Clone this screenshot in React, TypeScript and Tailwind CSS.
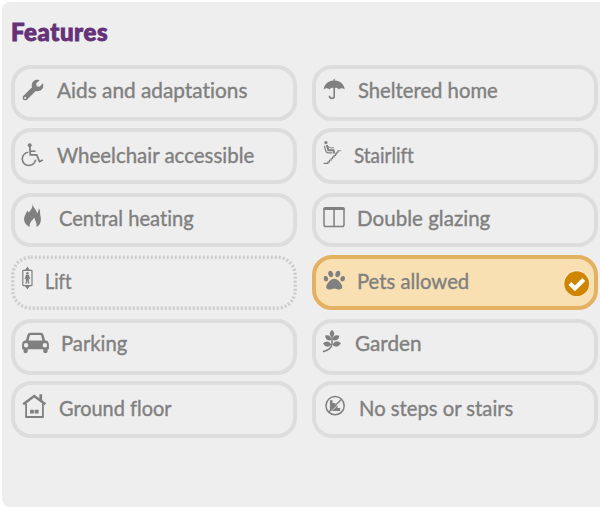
import type { ReactNode } from "react";
import { FaPaw, FaWrench } from "react-icons/fa";

const INK = "#808080";
const PANEL = "#eeeeee";

function Glyph({ children }: { children: ReactNode }) {
  return (
    <svg
      className="mt-[6px] ml-[5px] h-[28px] w-[24px] shrink-0 overflow-visible"
      viewBox="0 0 24 28"
      fill={INK}
      stroke="none"
    >
      {children}
    </svg>
  );
}

const Wrench = () => (
  <Glyph>
    <FaWrench x="2.5" y="4.5" size={21} color={INK} />
  </Glyph>
);

const Wheelchair = () => (
  <Glyph>
    <circle cx="9.7" cy="7.2" r="2" />
    <g fill="none" stroke={INK} strokeWidth="1.6">
      <path d="M9.8 8.5 L10.3 16.9 H16.7 L19.5 23.5 L22.9 22" strokeWidth="1.8" />
      <path d="M10 13.2 H15.5" />
      <path d="M8.3 14.2 A6.7 6.7 0 1 0 15.6 21.6" />
    </g>
  </Glyph>
);

const Flame = () => (
  <Glyph>
    <path d="M12.8 1 C13 5 16.6 6.6 17.1 10.4 C18.2 9.4 18.4 7.6 18.8 5.2 C20.4 7 20 9 20.2 11.5 C20.8 15 21.4 16.5 20.4 19.4 C19.7 21.6 18.3 23.2 16.4 24 C17.4 20 15.2 18.4 14.3 14.4 C12.6 17.6 9 18.9 9.7 24 C5.6 22 2.9 18 4.6 13.2 C5.3 11.2 6.8 9.8 7 7.3 L8.4 9.6 C10.8 7.6 12.4 4.8 12.8 1 Z" />
  </Glyph>
);

const Lift = () => (
  <Glyph>
    <path d="M7.4 1.4 L10 5.4 H4.8 Z M7.4 24.6 L10 20.8 H4.8 Z" />
    <rect x="2.8" y="5.4" width="9.2" height="15.2" rx="0.6" fill="none" stroke={INK} strokeWidth="1.2" />
    <circle cx="7.4" cy="8.2" r="1.2" />
    <path d="M6 9.8 H8.8 L10.2 14 L9.3 14.3 L8.7 13 L9.3 18.7 H8 L7.4 15 L6.8 18.7 H5.5 L6.1 13 L5.5 14.3 L4.6 14 Z" />
  </Glyph>
);

const Car = () => (
  <Glyph>
    <path
      fillRule="evenodd"
      d="M10.3 3.7 H20.7 Q23 3.7 23.6 6 L25 11.2 Q28.9 11.8 28.9 15.5 V20.3 H27.6 V22 A2.2 2.2 0 0 1 23.2 22 V20.3 H7.8 V22 A2.2 2.2 0 0 1 3.4 22 V20.3 H2.1 V15.5 Q2.1 11.8 6 11.2 L7.4 6 Q8 3.7 10.3 3.7 Z M10.9 6 Q10 6 9.7 7 L8.6 11.4 H22.4 L21.3 7 Q21 6 20.1 6 Z M6.1 14.1 A2.2 2.2 0 1 0 6.1 18.5 A2.2 2.2 0 1 0 6.1 14.1 Z M24.9 14.1 A2.2 2.2 0 1 0 24.9 18.5 A2.2 2.2 0 1 0 24.9 14.1 Z"
    />
  </Glyph>
);

const House = () => (
  <Glyph>
    <g fill="none" stroke={INK}>
      <path d="M3.2 13.3 L14.2 5 L25.4 13.3" strokeWidth="2.6" />
      <path d="M6.1 12.5 V26 H22.9 V12.5" strokeWidth="1.8" />
    </g>
    <path d="M19.4 3.3 H22.1 V10.5 L19.4 8.5 Z" />
    <rect x="10" y="18.8" width="3.9" height="3.8" rx="0.5" />
    <rect x="14.7" y="18.8" width="3.9" height="3.8" rx="0.5" />
  </Glyph>
);

const Umbrella = () => (
  <Glyph>
    <path d="M12.6 4 H13.8 V5.6 C19.2 5.9 22.9 9.3 23.8 14.4 C21.6 12.7 19.3 12.8 17.9 14.4 C16.7 12.9 14.9 12.4 13.9 13.2 H12.5 C11.4 12.4 9.7 12.9 8.5 14.4 C7.1 12.8 4.8 12.7 2.6 14.4 C3.5 9.3 7.2 5.9 12.6 5.6 Z" />
    <path d="M13.2 12.5 V21 Q13.2 23.4 10.8 23.4 Q8.5 23.4 8.4 20.8" fill="none" stroke={INK} strokeWidth="1.6" />
  </Glyph>
);

const Stairlift = () => (
  <Glyph>
    <circle cx="4.9" cy="4.6" r="1.6" />
    <g fill="none" stroke={INK}>
      <path d="M5.8 7 L7.4 12.2 H12.5 L13.3 15.4" strokeWidth="2" />
      <path d="M6.7 8.5 L9.6 9.8 L12.8 9.8" strokeWidth="1" />
      <path d="M3.3 7.6 L4.7 12.8 Q5.2 14.6 7 14.8 H11.4" strokeWidth="1.2" />
      <path
        d="M2.6 25.4 H7 V23.9 H8.5 V22.3 H10 V20.7 H11.5 V19.1 H13 V17.5 H14.5 V15.9 H15.8 V14.3 H17 V12.8 H19.8"
        strokeWidth="1.1"
      />
    </g>
  </Glyph>
);

const DoubleWindow = () => (
  <Glyph>
    <rect x="3" y="4.7" width="20" height="18.8" rx="1.8" fill="none" stroke={INK} strokeWidth="1.5" />
    <path d="M2.3 7 V6 Q2.3 4 4.3 4 H21.7 Q23.7 4 23.7 6 V7 Z" />
    <path d="M12.3 6 H13.8 V23.5 H12.3 Z" />
  </Glyph>
);

const Paw = () => (
  <Glyph>
    <FaPaw x="2.5" y="4.3" size={21.5} color={INK} />
  </Glyph>
);

const Sprig = () => (
  <Glyph>
    <path d="M11 0.8 Q15.6 4.6 11 8.4 Q6.4 4.6 11 0.8 Z" />
    <path d="M10.4 11 Q5 12.9 4 6.6 Q10.2 5.2 10.4 11 Z M11.4 11 Q11.9 4.9 18.4 6.8 Q17.4 12.9 11.4 11 Z" />
    <path d="M10.6 15.4 Q6 20.7 1.9 14.6 Q6.5 9.8 10.6 15.4 Z M11.2 15.4 Q15.4 9.8 20 14.3 Q16 20.5 11.2 15.4 Z" />
    <path d="M11 6 V14.5 C11 19.5 7 21 2 22.8" fill="none" stroke={INK} strokeWidth="1.5" />
  </Glyph>
);

const NoSteps = () => (
  <Glyph>
    <path d="M8.9 9.2 H11.6 V12 H14.3 V14.4 H16.6 V17 H19.2 V19.9 H8.9 Z" />
    <path d="M10.2 20.4 L21.4 9.2" stroke={PANEL} strokeWidth="0.9" />
    <path d="M7.6 21.2 L20.6 8.3" stroke={INK} strokeWidth="1.4" />
    <circle cx="14.1" cy="14.7" r="9.1" fill="none" stroke={INK} strokeWidth="1.5" />
  </Glyph>
);

function CheckBadge() {
  return (
    <svg className="mt-[11px] mr-[4px] ml-auto size-[27px] shrink-0" viewBox="0 0 27 27">
      <circle cx="13.7" cy="13.2" r="13.3" fill="#fdebcd" />
      <circle cx="13.7" cy="13.7" r="12.4" fill="#cf8500" />
      <path d="M6.9 13.6 L11.9 18.4 L20.8 9.6" fill="none" stroke="#fff" strokeWidth="4.2" />
    </svg>
  );
}

interface FeatureProps {
  icon: ReactNode;
  label: string;
  text: string;
  state?: "idle" | "focused" | "selected";
}

function Feature({ icon, label, text, state = "idle" }: FeatureProps) {
  const frame =
    state === "selected"
      ? "border-[#e4b163] bg-[#f9e0b2]"
      : state === "focused"
        ? "border-transparent"
        : "border-[#dddddd]";
  return (
    <button
      type="button"
      className={`relative flex h-full w-[286px] items-start rounded-[20px] border-4 text-left ${frame}`}
    >
      {state === "focused" && (
        <svg className="absolute -top-1 -left-1 h-[55px] w-[286px]" viewBox="0 0 286 55">
          <rect
            x="1.8"
            y="2.2"
            width="282.4"
            height="51"
            rx="18"
            fill="none"
            stroke="#cccccc"
            strokeWidth="3.4"
            strokeDasharray="2 2"
          />
        </svg>
      )}
      {icon}
      <span
        className={`origin-left text-[22px] leading-[26px] whitespace-nowrap text-[#808080] [font-variant-ligatures:none] [-webkit-text-stroke:0.4px_#808080] ${text}`}
      >
        {label}
      </span>
      {state === "selected" && <CheckBadge />}
    </button>
  );
}

export default function App() {
  return (
    <div className="h-[507px] w-[600px] overflow-hidden bg-white pt-[2px] pl-[2px] font-[Lato,sans-serif]">
      <section className="h-[505px] w-[620px] rounded-[8px] bg-[#eeeeee] pl-[9px]">
        <h2 className="h-[63px] pt-[15px] text-[24px] leading-[30px] font-black tracking-[0.6px] text-[#653279] [-webkit-text-stroke:0.9px_#653279]">
          Features
        </h2>
        <div className="flex flex-col">
          <div className="flex h-[56px] gap-[15px]">
            <Feature icon={<Wrench />} label="Aids and adaptations" text="mt-[8px] ml-[13px] scale-x-[0.946]" />
            <Feature icon={<Umbrella />} label="Sheltered home" text="mt-[8px] ml-[13px] scale-x-[0.92]" />
          </div>
          <div className="mt-[7px] flex h-[56px] gap-[15px]">
            <Feature icon={<Wheelchair />} label="Wheelchair accessible" text="mt-[10px] ml-[13px] scale-x-[0.93]" />
            <Feature icon={<Stairlift />} label="Stairlift" text="mt-[10px] ml-[9px] scale-x-[0.86]" />
          </div>
          <div className="mt-[9px] flex h-[54px] gap-[15px]">
            <Feature icon={<Flame />} label="Central heating" text="mt-[8px] ml-[15px] scale-x-[0.915]" />
            <Feature icon={<DoubleWindow />} label="Double glazing" text="mt-[8px] ml-[12px] scale-x-[0.935]" />
          </div>
          <div className="mt-[8px] flex h-[55px] gap-[15px]">
            <Feature icon={<Lift />} label="Lift" text="mt-[9px] ml-px scale-x-[0.82]" state="focused" />
            <Feature icon={<Paw />} label="Pets allowed" text="mt-[9px] ml-[12px] scale-x-[0.92]" state="selected" />
          </div>
          <div className="mt-[9px] flex h-[56px] gap-[15px]">
            <Feature icon={<Car />} label="Parking" text="mt-[7px] ml-[17px] scale-x-[0.92]" />
            <Feature icon={<Sprig />} label="Garden" text="mt-[7px] ml-[10px] scale-x-[0.94]" />
          </div>
          <div className="mt-[6px] flex h-[57px] gap-[15px]">
            <Feature icon={<House />} label="Ground floor" text="mt-[10px] ml-[15px] scale-x-[0.905]" />
            <Feature icon={<NoSteps />} label="No steps or stairs" text="mt-[10px] ml-[14px] scale-x-[0.92]" />
          </div>
        </div>
      </section>
    </div>
  );
}
